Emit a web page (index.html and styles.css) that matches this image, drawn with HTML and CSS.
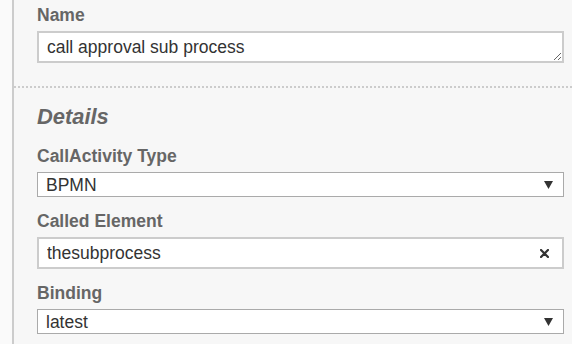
FILE: index.html
```html
<!DOCTYPE html>
<html lang="en">
<head>
<meta charset="utf-8">
<title>Properties</title>
<link rel="stylesheet" href="styles.css">
</head>
<body>
<div class="panel">
  <div class="group group-general">
    <div class="entry">
      <label class="label" for="name">Name</label>
      <textarea id="name" class="textarea" rows="1">call approval sub process</textarea>
    </div>
  </div>
  <div class="group group-details">
    <div class="group-title">Details</div>
    <div class="entry">
      <label class="label" for="type">CallActivity Type</label>
      <div class="select-box">
        <select id="type" class="select"><option>BPMN</option></select>
        <svg class="arrow" width="9" height="8" viewBox="0 0 9 8"><polygon points="0,0 9,0 4.5,8" fill="#333"/></svg>
      </div>
    </div>
    <div class="entry">
      <label class="label" for="called">Called Element</label>
      <div class="input-box">
        <input id="called" class="input" type="text" value="thesubprocess">
        <svg class="clear" width="9" height="9" viewBox="0 0 9 9"><path d="M1 1 L8 8 M8 1 L1 8" stroke="#333" stroke-width="2.2" stroke-linecap="square"/></svg>
      </div>
    </div>
    <div class="entry">
      <label class="label" for="binding">Binding</label>
      <div class="select-box">
        <select id="binding" class="select"><option>latest</option></select>
        <svg class="arrow" width="9" height="8" viewBox="0 0 9 8"><polygon points="0,0 9,0 4.5,8" fill="#333"/></svg>
      </div>
    </div>
  </div>
</div>
</body>
</html>
```

FILE: styles.css
```css
html, body {
  margin: 0;
  padding: 0;
  height: 100%;
}

body {
  background: #fafafa;
  font-family: "Liberation Sans", Arial, sans-serif;
  font-size: 17.5px;
  color: #333;
  overflow: hidden;
}

.panel {
  margin-left: 12px;
  min-height: 100%;
  background: #f7f7f7;
  border-left: 2px solid #ccc;
  box-sizing: border-box;
}

.group {
  padding: 0 8px 0 23px;
}

.group-general {
  padding-top: 5px;
  padding-bottom: 23px;
  border-bottom: 2px dotted #ccc;
}

.group-general .entry {
  margin-bottom: 0;
}

.group-details {
  padding-top: 16px;
}

.group-title {
  font-size: 21.9px;
  line-height: 25px;
  font-weight: bold;
  font-style: italic;
  color: #666;
  margin-bottom: 17px;
}

.entry {
  margin-bottom: 14px;
}

.label {
  display: block;
  font-weight: bold;
  color: #666;
  line-height: 20px;
  margin-bottom: 6px;
}

.textarea {
  display: block;
  width: 100%;
  height: 32px;
  box-sizing: border-box;
  margin: 0;
  padding: 4px 8px;
  border: 2px solid #ccc;
  background: #fff;
  font-family: inherit;
  font-size: 17.5px;
  line-height: 20px;
  color: #333;
  resize: vertical;
  overflow: hidden;
  outline: none;
}

.select-box {
  display: flex;
  align-items: center;
  height: 25px;
  box-sizing: border-box;
  border: 1px solid #aaa;
  background: #fff;
  padding: 0 10px 0 8px;
}

.select {
  flex: 1;
  appearance: none;
  -webkit-appearance: none;
  border: 0;
  margin: 0;
  padding: 0;
  background: transparent;
  font-family: inherit;
  font-size: 17.5px;
  line-height: 20px;
  height: 20px;
  color: #333;
  outline: none;
}

.arrow {
  display: block;
  flex: none;
}

.input-box {
  display: flex;
  align-items: center;
  height: 32px;
  box-sizing: border-box;
  border: 2px solid #ccc;
  background: #fff;
  padding: 0 13px 0 8px;
}

.input {
  flex: 1;
  min-width: 0;
  border: 0;
  margin: 0;
  padding: 0;
  background: transparent;
  font-family: inherit;
  font-size: 17.5px;
  line-height: 28px;
  height: 28px;
  color: #333;
  outline: none;
}

.clear {
  display: block;
  flex: none;
}
```
